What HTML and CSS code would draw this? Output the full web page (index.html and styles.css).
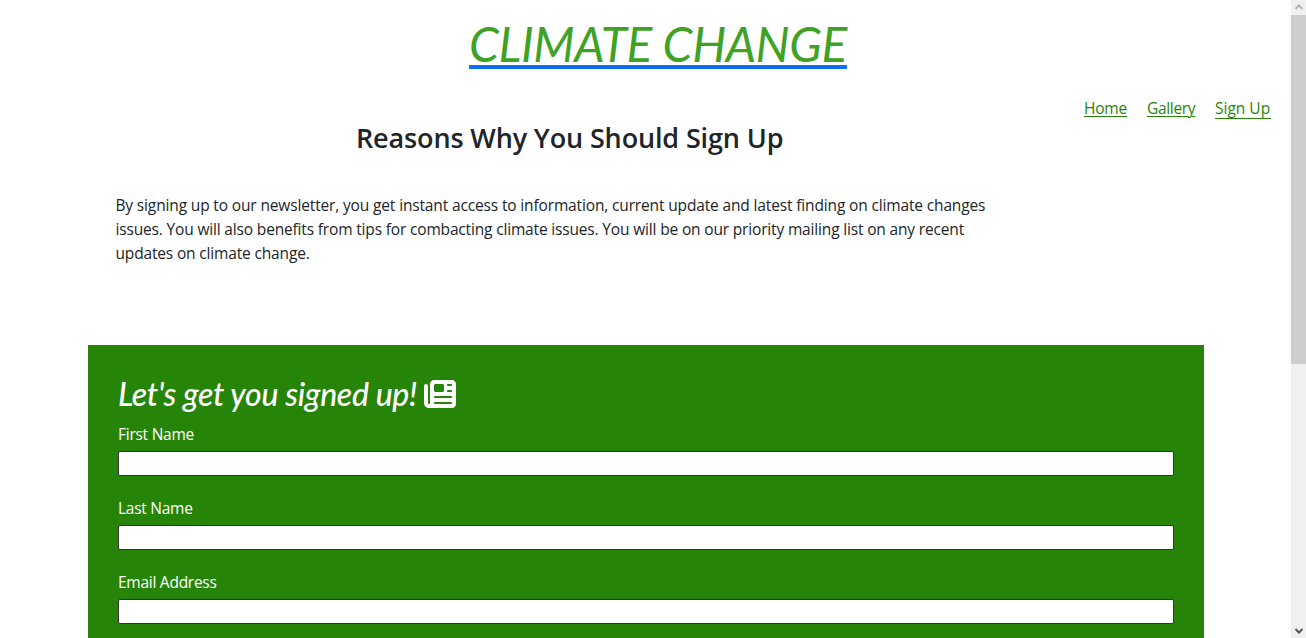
FILE: index.html
```html
<!DOCTYPE html>
<html lang="en">
<head>
<meta charset="utf-8">
<title>Climate Change - Sign Up</title>
<link rel="stylesheet" href="styles.css">
</head>
<body>
<div class="page">
  <header>
    <h1 class="logo"><a href="#">CLIMATE CHANGE</a></h1>
  </header>
  <div class="top">
    <main class="reasons">
      <h2>Reasons Why You Should Sign Up</h2>
      <p><span class="l1">By signing up to our newsletter, you get instant access to information, current update and latest finding on climate changes</span><br><span class="l2">issues. You will also benefits from tips for combacting climate issues. You will be on our priority mailing list on any recent</span><br><span class="l3">updates on climate change.</span></p>
    </main>
    <nav class="menu">
      <a class="home" href="#">Home</a>
      <a class="gallery" href="#">Gallery</a>
      <a class="active" href="#">Sign Up</a>
    </nav>
  </div>
  <form class="signup">
    <h3><span>Let's get you signed up!</span>
      <svg class="news" viewBox="0 0 512 512" aria-hidden="true"><path fill-rule="evenodd" d="M96 96c0-35.300 28.700-64 64-64h288c35.300 0 64 28.700 64 64v320c0 35.300-28.700 64-64 64H80c-44.200 0-80-35.800-80-80V128c0-17.700 14.300-32 32-32s32 14.300 32 32v272c0 8.800 7.200 16 16 16s16-7.200 16-16zm64 24v80c0 13.300 10.700 24 24 24h112c13.300 0 24-10.700 24-24v-80c0-13.300-10.700-24-24-24H184c-13.300 0-24 10.700-24 24zm208-8c0 8.800 7.200 16 16 16h48c8.800 0 16-7.200 16-16s-7.200-16-16-16h-48c-8.800 0-16 7.200-16 16zm0 96c0 8.800 7.200 16 16 16h48c8.800 0 16-7.200 16-16s-7.200-16-16-16h-48c-8.800 0-16 7.200-16 16zM160 304c0 8.800 7.200 16 16 16h256c8.800 0 16-7.200 16-16s-7.200-16-16-16H176c-8.800 0-16 7.200-16 16zm0 96c0 8.800 7.200 16 16 16h256c8.800 0 16-7.200 16-16s-7.200-16-16-16H176c-8.800 0-16 7.200-16 16z"/></svg>
    </h3>
    <label for="first">First Name</label>
    <input id="first" type="text">
    <label for="last">Last Name</label>
    <input id="last" type="text">
    <label for="email">Email Address</label>
    <input id="email" type="text">
  </form>
</div>
<aside class="scrollbar" aria-hidden="true">
  <svg viewBox="0 0 15 15"><path d="M4.500 9 8 5.500 11.500 9" stroke="#b5b5b5"/></svg>
  <div class="thumb"></div>
  <svg class="down" viewBox="0 0 15 15"><path d="M4.500 6 8 9.500 11.500 6" stroke="#555"/></svg>
</aside>
</body>
</html>
```

FILE: styles.css
```css
* { box-sizing: border-box; }
body {
  margin: 0;
  height: 638px;
  overflow: hidden;
  display: flex;
  background: #fff;
  color: #212529;
  font: 15.5px/24px "Open Sans", sans-serif;
}
.page { width: 1291px; height: 638px; overflow: hidden; }
header { height: 95px; padding: 15px 0 0 469px; }
.logo { margin: 0; font: italic 400 48px/58px Lato, sans-serif; letter-spacing: -0.46px; }
.logo a {
  display: block;
  width: 378px;
  height: 54px;
  border-bottom: 4px solid #0d6efd;
  color: #40a225;
  text-decoration: none;
  white-space: nowrap;
}
.top { display: flex; height: 250px; }
.reasons { width: 1084px; padding: 26px 0 0 115.5px; }
.reasons h2 { margin: 0 0 38px 240.5px; font-size: 27px; line-height: 34px; font-weight: 600; letter-spacing: -0.14px; white-space: nowrap; }
.reasons p { margin: 0; white-space: nowrap; }
.l1 { letter-spacing: -0.146px; }
.l2 { letter-spacing: -0.165px; }
.l3 { letter-spacing: -0.16px; }
.menu { display: flex; align-items: flex-start; gap: 20px; padding-top: 1px; white-space: nowrap; }
.menu a { color: #268508; text-underline-offset: 2px; text-decoration-thickness: 1px; }
.menu .home { width: 43px; letter-spacing: -0.2px; }
.menu .gallery { width: 48px; letter-spacing: -0.33px; }
.menu .active { width: 56px; height: 23px; border-bottom: 1px solid #268508; text-decoration: none; }
.signup {
  width: 1116px;
  height: 293px;
  margin-left: 88px;
  padding: 30px 30px 0;
  background: #268508;
  color: #fff;
  overflow: hidden;
}
.signup h3 { display: flex; gap: 6px; margin: 0 0 9px; height: 38px; font: italic 500 32px/38px Lato, sans-serif; letter-spacing: -0.32px; white-space: nowrap; }
.signup h3 span { width: 300px; }
.news { width: 32px; height: 32px; margin-top: 3px; fill: #fff; }
.signup label { display: block; height: 24px; margin: 0 0 5px; letter-spacing: -0.26px; }
.signup input {
  display: block;
  width: 1056px;
  height: 25px;
  margin: 0 0 20px;
  padding: 1px 2px;
  border: 1px solid #333;
  border-radius: 2px;
  background: #fff;
}
.scrollbar { width: 15px; height: 638px; display: flex; flex-direction: column; background: #f0f0f0; }
.scrollbar svg { width: 15px; height: 15px; fill: none; stroke-width: 2; }
.thumb { height: 349px; background: #cdcdcd; }
.scrollbar .down { margin-top: auto; }
```
